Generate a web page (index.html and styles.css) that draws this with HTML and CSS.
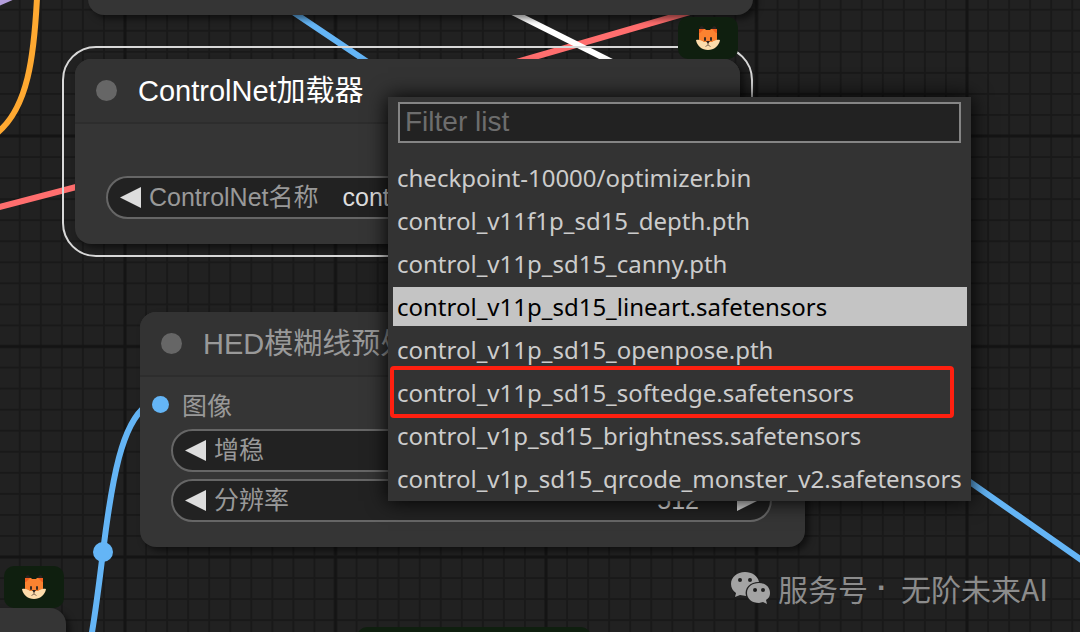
FILE: index.html
```html
<!DOCTYPE html>
<html lang="zh-CN">
<head>
<meta charset="utf-8">
<meta name="viewport" content="width=device-width, initial-scale=1">
<title>ComfyUI</title>
<link rel="stylesheet" href="styles.css">
</head>
<body>
<main class="canvas">
  <svg class="backdrop" aria-hidden="true">
    <defs>
      <pattern id="minor" width="20" height="20" patternUnits="userSpaceOnUse" patternTransform="translate(125 136) scale(1.0525)">
        <path d="M0 0H20M0 0V20M0 20H20M20 0V20" stroke="#191919" stroke-width="2" fill="none"/>
      </pattern>
      <pattern id="major" width="200" height="200" patternUnits="userSpaceOnUse" patternTransform="translate(125 136) scale(1.0525)">
        <path d="M0 0H200M0 0V200M0 200H200M200 0V200" stroke="#141414" stroke-width="3" fill="none"/>
      </pattern>
      <symbol id="fox" viewBox="0 0 24 25">
        <path d="M3 6 4 1 6 0 10 4H14L18 0 20 1 21 6Z" fill="#2b2220"/>
        <path d="M3 3H9L10 4H14L15 3H21V15H3Z" fill="#fb8230"/>
        <path d="M3 3H8L4 7H3ZM21 3H16L20 7H21Z" fill="#f4601f"/>
        <path d="M0 14C4 13 7 15 9 16H15C17 15 20 13 24 14 23 20 18 24 12 24S1 20 0 14Z" fill="#fddcab"/>
        <path d="M3 14V8H21V14C18 14 17 16 15 16H9C7 16 6 14 3 14Z" fill="#fb8230"/>
        <rect x="8" y="11" width="2" height="4" rx="1" fill="#3a2a22"/>
        <rect x="14" y="11" width="2" height="4" rx="1" fill="#3a2a22"/>
        <path d="M10 15H14L12 18Z" fill="#30231f"/>
        <path d="M12 17V19M9.500 20.500 12 19 14.500 20.500" stroke="#8a705a" fill="none"/>
      </symbol>
    </defs>
    <rect width="100%" height="100%" fill="url(#minor)"/>
    <rect width="100%" height="100%" fill="url(#major)"/>
    <g fill="none" stroke-width="6">
      <path d="M-4 4 12-3" stroke="#b39ddb"/>
      <path d="M37-2C34 56 28 108-3 133" stroke="#ffa931"/>
      <path d="M-4 208 80 186M510 64 700 9" stroke="#ff6e6e"/>
      <path d="M290 10 372 65M960 475 1090 566" stroke="#64b5f6"/>
      <path d="M508 10 620 66" stroke="#fff"/>
      <path d="M146 406C122 424 112 478 103 552 99 584 96 610 91 638" stroke="#64b5f6"/>
    </g>
    <circle cx="103" cy="552" r="10" fill="#64b5f6"/>
  </svg>

  <article class="node node-top"></article>
  <article class="node node-corner"></article>
  <span class="badge badge-corner"><svg width="24" height="25"><use href="#fox"/></svg></span>
  <span class="badge badge-bottom"></span>

  <article class="node node-loader">
    <header class="node-head"><i class="dot"></i><h2>ControlNet加载器</h2></header>
    <div class="node-body loader-body">
      <div class="widget">
        <button class="arrow" aria-label="上一个"></button>
        <span class="name">ControlNet名称</span>
        <span class="value">control_v11p_sd15_lineart</span>
        <button class="arrow next" aria-label="下一个"></button>
      </div>
    </div>
  </article>
  <span class="badge badge-loader"><svg width="24" height="25"><use href="#fox"/></svg></span>

  <article class="node node-hed">
    <header class="node-head"><i class="dot"></i><h2>HED模糊线预处理器</h2></header>
    <div class="node-body">
      <p class="port">图像</p>
      <div class="widget">
        <button class="arrow" aria-label="上一个"></button>
        <span class="name">增稳</span>
        <button class="arrow next" aria-label="下一个"></button>
      </div>
      <div class="widget">
        <button class="arrow" aria-label="减小"></button>
        <span class="name">分辨率</span>
        <span class="number">512</span>
        <button class="arrow next" aria-label="增大"></button>
      </div>
    </div>
  </article>

  <div class="menu">
    <input class="filter" type="text" placeholder="Filter list" aria-label="Filter list">
    <div class="entries">
      <button class="entry">checkpoint-10000/optimizer.bin</button>
      <button class="entry">control_v11f1p_sd15_depth.pth</button>
      <button class="entry">control_v11p_sd15_canny.pth</button>
      <button class="entry selected">control_v11p_sd15_lineart.safetensors</button>
      <button class="entry">control_v11p_sd15_openpose.pth</button>
      <button class="entry marked">control_v11p_sd15_softedge.safetensors</button>
      <button class="entry">control_v1p_sd15_brightness.safetensors</button>
      <button class="entry">control_v1p_sd15_qrcode_monster_v2.safetensors</button>
    </div>
  </div>

  <div class="watermark">
    <svg width="40" height="32" viewBox="0 0 40 32" aria-hidden="true">
      <path fill="#a3a3a3" fill-rule="evenodd" d="M14 0C6 0 0 5 0 12c0 4 2 7 5 9l-1 4 5-2 6 1C13 16 19 10 28 10 27 4 21 0 14 0ZM9 6a2 2 0 1 1 0 4 2 2 0 0 1 0-4Zm10 0a2 2 0 1 1 0 4 2 2 0 0 1 0-4Z"/>
      <path fill="#a3a3a3" fill-rule="evenodd" d="M28 11c-7 0-12 4-12 10s5 10 12 10l4-1 4 2-1-4c3-2 4-4 4-7 0-6-5-10-11-10Zm-4 5a2 2 0 1 1 0 4 2 2 0 0 1 0-4Zm8 0a2 2 0 1 1 0 4 2 2 0 0 1 0-4Z"/>
    </svg>
    <span>服务号</span><span class="sep">·</span><span>无阶未来AI</span>
  </div>
</main>
</body>
</html>
```
FILE: styles.css
```css
* { box-sizing: border-box; }
body { margin: 0; }
button, input { font: inherit; border: 0; }
h2, p { margin: 0; font-weight: 400; }

.canvas {
  position: relative;
  height: 100vh;
  overflow: hidden;
  background: #212121;
  font-family: "Liberation Sans", "Noto Sans CJK SC", sans-serif;
  font-size: 25px;
}
.backdrop {
  position: absolute;
  inset: 0;
  width: 100%;
  height: 100%;
}

/* Nodes placed on the free canvas */
.node {
  position: absolute;
  width: 665px;
  background: #353535;
  border-radius: 16px;
  box-shadow: 4px 4px 6px rgba(0, 0, 0, .5);
  color: #999;
}
.node-top { left: 88px; top: -100px; height: 115px; }
.node-corner { left: -599px; top: 608px; height: 200px; }
.node-loader { left: 75px; top: 59px; }
.node-loader::before {
  content: "";
  position: absolute;
  inset: -13px;
  border: 2px solid #d8d8d8;
  border-radius: 34px;
  pointer-events: none;
}
.node-hed { left: 140px; top: 312px; }
.node-head {
  display: flex;
  align-items: center;
  gap: 21px;
  height: 65px;
  padding-left: 21px;
  border-bottom: 2px solid #2d2d2d;
  border-radius: 16px 16px 0 0;
  background: #333;
}
.node-head h2 { font-size: 29px; line-height: 32px; white-space: nowrap; }
.node-loader h2 { color: #fff; }
.dot { width: 21px; height: 21px; border-radius: 50%; background: #666; }
.node-body {
  display: flex;
  flex-direction: column;
  gap: 7px;
  padding: 9px 33px 25px 31px;
}
.loader-body { padding-top: 52px; }
.port {
  display: flex;
  align-items: center;
  gap: 13px;
  height: 36px;
  margin-left: -19px;
}
.port::before {
  content: "";
  width: 17px;
  height: 17px;
  border-radius: 50%;
  background: #64b5f6;
}
.widget {
  display: flex;
  align-items: center;
  height: 43px;
  padding: 0 12px;
  border: 2px solid #666;
  border-radius: 22px;
  background: #222;
  line-height: 32px;
  white-space: nowrap;
}
.widget span { padding-bottom: 1px; }
.arrow {
  width: 21px;
  height: 21px;
  padding: 0;
  background: #ddd;
  clip-path: polygon(0 50%, 100% 0, 100% 100%);
}
.next { margin-left: auto; clip-path: polygon(0 0, 100% 50%, 0 100%); }
.name { margin-left: 8px; }
.value { margin-left: 24px; color: #ddd; }
.number { margin-left: auto; color: #ddd; }
.number + .next { margin-left: 38px; }

.badge {
  position: absolute;
  display: flex;
  align-items: center;
  justify-content: center;
  width: 60px;
  height: 42px;
  border-radius: 10px;
  background: #0f1f0f;
}
.badge-loader { left: 678px; top: 17px; }
.badge-corner { left: 4px; top: 566px; }
.badge-bottom { left: 357px; top: 627px; width: 234px; }

/* Context menu above the canvas */
.menu {
  position: absolute;
  left: 388px;
  top: 97px;
  padding: 5px 4px 3px 5px;
  background: #333;
  box-shadow: 0 0 20px #000;
  color: #ccc;
}
.filter {
  display: block;
  width: calc(100% - 11px);
  height: 41px;
  margin: 0 6px 15px 5px;
  padding: 0 5px 2px;
  border: 2px solid #858585;
  background: #222;
  color: #ddd;
  font-size: 28px;
}
.filter::placeholder { color: #6d6d6d; }
.entries { display: flex; flex-direction: column; gap: 4px; }
.entry {
  position: relative;
  height: 39px;
  padding: 0 5px 0 4px;
  background: none;
  color: #ccc;
  font-family: "Noto Sans", sans-serif;
  font-size: 24px;
  line-height: 39px;
  text-align: left;
  white-space: nowrap;
}
.selected { background: #c4c4c4; color: #000; }
.marked::after {
  content: "";
  position: absolute;
  inset: -7px 13px -6px -3px;
  border: 4px solid #ff2010;
  border-radius: 4px;
}

.watermark {
  position: absolute;
  right: 32px;
  bottom: 28px;
  display: flex;
  align-items: center;
  color: #8c8c8c;
  font-family: "Noto Sans CJK SC", sans-serif;
  font-size: 30px;
  line-height: 32px;
}
.watermark svg { margin-right: 7px; }
.sep { width: 33px; padding-right: 5px; font-family: "Liberation Sans", sans-serif; font-weight: 700; text-align: center; }
```
